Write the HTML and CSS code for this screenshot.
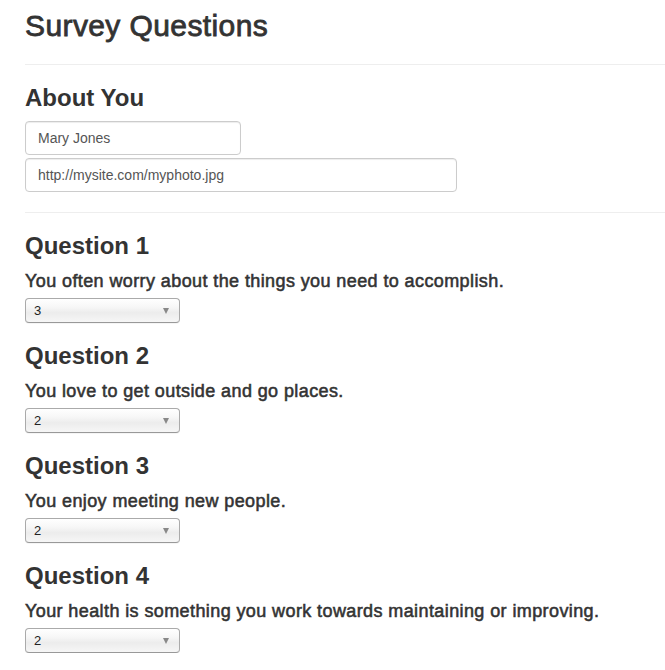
FILE: index.html
```html
<!DOCTYPE html>
<html>
<head>
<meta charset="utf-8">
<title>Survey Questions</title>
<link rel="stylesheet" href="styles.css">
</head>
<body>
<div class="page">
  <h1 class="title">Survey Questions</h1>
  <hr class="rule">
  <section class="about">
    <h3 class="section-title">About You</h3>
    <input class="text-input name-input" type="text" value="Mary Jones">
    <input class="text-input photo-input" type="text" value="http://mysite.com/myphoto.jpg">
  </section>
  <hr class="rule">
  <section class="question">
    <h3 class="section-title">Question 1</h3>
    <h4 class="prompt">You often worry about the things you need to accomplish.</h4>
    <span class="select-wrap"><select class="choice"><option>1</option><option>2</option><option selected>3</option><option>4</option><option>5</option></select></span>
  </section>
  <section class="question">
    <h3 class="section-title">Question 2</h3>
    <h4 class="prompt">You love to get outside and go places.</h4>
    <span class="select-wrap"><select class="choice"><option>1</option><option selected>2</option><option>3</option><option>4</option><option>5</option></select></span>
  </section>
  <section class="question">
    <h3 class="section-title">Question 3</h3>
    <h4 class="prompt">You enjoy meeting new people.</h4>
    <span class="select-wrap"><select class="choice"><option>1</option><option selected>2</option><option>3</option><option>4</option><option>5</option></select></span>
  </section>
  <section class="question">
    <h3 class="section-title">Question 4</h3>
    <h4 class="prompt">Your health is something you work towards maintaining or improving.</h4>
    <span class="select-wrap"><select class="choice"><option>1</option><option selected>2</option><option>3</option><option>4</option><option>5</option></select></span>
  </section>
</div>
</body>
</html>
```

FILE: styles.css
```css
html, body {
  margin: 0;
  padding: 0;
  background: #fff;
}

body {
  font-family: "Liberation Sans", Arial, Helvetica, sans-serif;
  color: #333;
  overflow: hidden;
}

.page {
  padding-left: 25px;
}

.title {
  margin: 8px 0 0 0;
  font-size: 30px;
  line-height: 36px;
  font-weight: normal;
  letter-spacing: 0.4px;
  -webkit-text-stroke: 0.8px #333;
  color: #333;
}

.rule {
  margin: 20px 0 0 0;
  border: 0;
  border-top: 1px solid #eee;
  height: 0;
}

.section-title {
  margin: 20px 0 0 0;
  font-size: 24px;
  line-height: 26px;
  font-weight: bold;
  color: #333;
}

.about {
  display: flex;
  flex-direction: column;
  align-items: flex-start;
}

.text-input {
  box-sizing: border-box;
  height: 34px;
  padding: 6px 12px;
  font-family: "Liberation Sans", Arial, sans-serif;
  font-size: 14px;
  color: #555;
  background: #fff;
  border: 1px solid #ccc;
  border-radius: 4px;
  box-shadow: inset 0 1px 1px rgba(0, 0, 0, 0.075);
  outline: none;
}

.name-input {
  margin-top: 10px;
  width: 216px;
}

.photo-input {
  margin-top: 3px;
  width: 432px;
}

.question {
  display: flex;
  flex-direction: column;
  align-items: flex-start;
}

.prompt {
  margin: 12px 0 0 0;
  font-size: 18px;
  line-height: 20px;
  font-weight: normal;
  letter-spacing: 0.4px;
  -webkit-text-stroke: 0.55px #333;
  color: #333;
}

.select-wrap {
  position: relative;
  display: block;
  margin-top: 7px;
  width: 155px;
  height: 25px;
}

.choice {
  -webkit-appearance: none;
  appearance: none;
  box-sizing: border-box;
  width: 155px;
  height: 25px;
  margin: 0;
  padding: 0 20px 0 8px;
  font-family: "Liberation Sans", Arial, sans-serif;
  font-size: 13px;
  color: #222;
  border: 1px solid #aaa;
  border-bottom-color: #999;
  border-radius: 4px;
  background: linear-gradient(to bottom, #ffffff 0%, #f7f7f7 35%, #ececec 60%, #f6f6f6 100%);
  box-shadow: 0 1px 0 rgba(0, 0, 0, 0.04);
  outline: none;
}

.select-wrap::after {
  content: "";
  position: absolute;
  right: 11px;
  top: 10px;
  width: 0;
  height: 0;
  border-left: 3.5px solid transparent;
  border-right: 3.5px solid transparent;
  border-top: 6px solid #888;
  pointer-events: none;
}
```
